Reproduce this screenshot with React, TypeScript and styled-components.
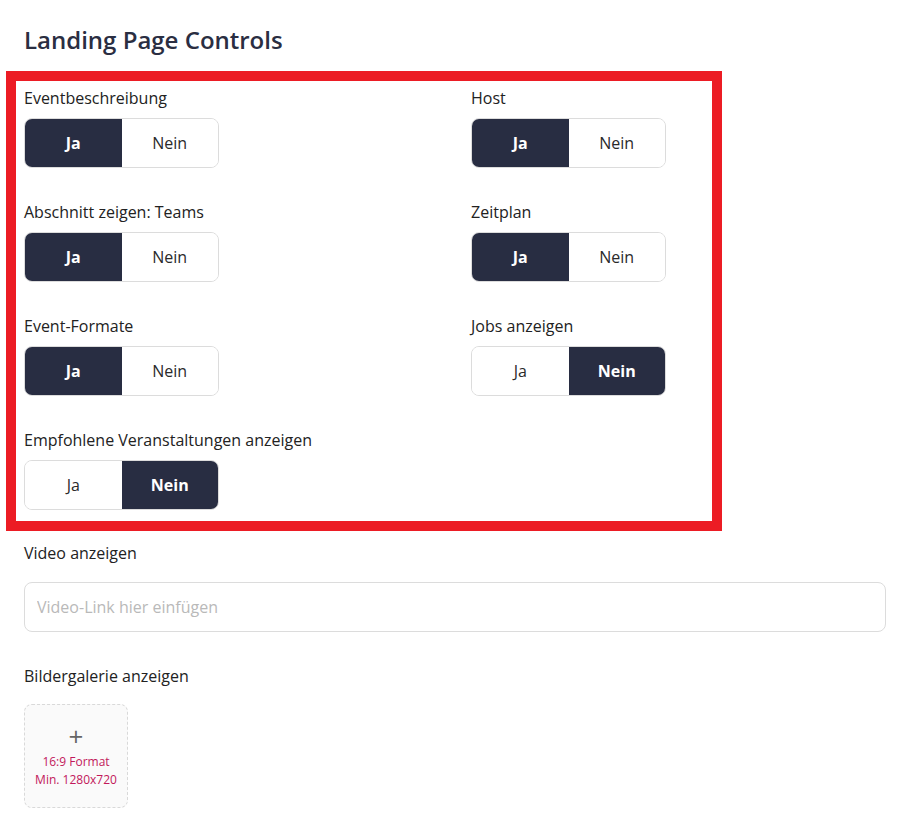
import React, { useState } from 'react';
import styled, { createGlobalStyle } from 'styled-components';

const GlobalStyle = createGlobalStyle`
  body {
    margin: 0;
    background: #fff;
    font-family: "Open Sans", "Liberation Sans", sans-serif;
    color: #222;
  }
`;

type Setting = { label: string; value: boolean };

const initialSettings: Setting[] = [
  { label: 'Eventbeschreibung', value: true },
  { label: 'Host', value: true },
  { label: 'Abschnitt zeigen: Teams', value: true },
  { label: 'Zeitplan', value: true },
  { label: 'Event-Formate', value: true },
  { label: 'Jobs anzeigen', value: false },
  { label: 'Empfohlene Veranstaltungen anzeigen', value: false },
];

const App: React.FC = () => {
  const [settings, setSettings] = useState(initialSettings);

  const setValue = (index: number, value: boolean) => {
    setSettings(prev => prev.map((s, i) => (i === index ? { ...s, value } : s)));
  };

  return (
    <>
      <GlobalStyle />
      <Page>
        <Title>Landing Page Controls</Title>
        <Highlight>
          <Grid>
            {settings.map((s, i) => (
              <Field key={s.label}>
                <Label>{s.label}</Label>
                <Toggle>
                  <ToggleButton $active={s.value} onClick={() => setValue(i, true)}>Ja</ToggleButton>
                  <ToggleButton $active={!s.value} onClick={() => setValue(i, false)}>Nein</ToggleButton>
                </Toggle>
              </Field>
            ))}
          </Grid>
        </Highlight>
        <Section $top={11}>
          <Label $gap={18}>Video anzeigen</Label>
          <Input placeholder="Video-Link hier einfügen" />
        </Section>
        <Section $top={33}>
          <Label $gap={17}>Bildergalerie anzeigen</Label>
          <Upload>
            <Plus>+</Plus>
            <Hint>16:9 Format</Hint>
            <Hint>Min. 1280x720</Hint>
          </Upload>
        </Section>
      </Page>
    </>
  );
};

export default App;

const Page = styled.div`
  padding: 24px 21px 16px 24px;
`;

const Title = styled.h1`
  margin: 0 0 15px;
  font-size: 24px;
  line-height: 32px;
  font-weight: 600;
  color: #2a2e42;
`;

const Highlight = styled.div`
  margin-left: -18px;
  width: 688px;
  border: 10px solid #ec1c24;
  padding: 6px 0 11px 8px;
`;

const Grid = styled.div`
  display: grid;
  grid-template-columns: 447px 1fr;
  row-gap: 33px;
`;

const Field = styled.div`
  display: flex;
  flex-direction: column;
  align-items: flex-start;
`;

const Label = styled.div<{ $gap?: number }>`
  font-size: 16px;
  line-height: 22px;
  color: #222;
  margin-bottom: ${p => p.$gap ?? 9}px;
`;

const Toggle = styled.div`
  display: flex;
  width: 195px;
  height: 50px;
  border: 1px solid #dcdcdc;
  border-radius: 8px;
  overflow: hidden;
  box-sizing: border-box;
`;

const ToggleButton = styled.button<{ $active: boolean }>`
  flex: 1;
  border: none;
  margin: 0;
  padding: 0;
  cursor: pointer;
  font-family: inherit;
  font-size: 16px;
  font-weight: ${p => (p.$active ? 700 : 400)};
  background: ${p => (p.$active ? '#282d42' : '#fff')};
  color: ${p => (p.$active ? '#fff' : '#2a2a2a')};
`;

const Section = styled.div<{ $top: number }>`
  margin-top: ${p => p.$top}px;
`;

const Input = styled.input`
  display: block;
  width: 100%;
  height: 50px;
  box-sizing: border-box;
  border: 1px solid #dcdcdc;
  border-radius: 8px;
  padding: 0 12px;
  font-family: inherit;
  font-size: 16px;
  color: #222;
  outline: none;
  &::placeholder {
    color: #b9b9b9;
  }
`;

const Upload = styled.div`
  width: 104px;
  height: 104px;
  box-sizing: border-box;
  border: 1px dashed #d9d9d9;
  border-radius: 8px;
  background: #fafafa;
  display: flex;
  flex-direction: column;
  align-items: center;
  justify-content: center;
  cursor: pointer;
`;

const Plus = styled.div`
  font-size: 26px;
  line-height: 26px;
  font-weight: 400;
  color: #666;
  margin-bottom: 4px;
`;

const Hint = styled.div`
  font-size: 12px;
  line-height: 18px;
  color: #c2185b;
`;
